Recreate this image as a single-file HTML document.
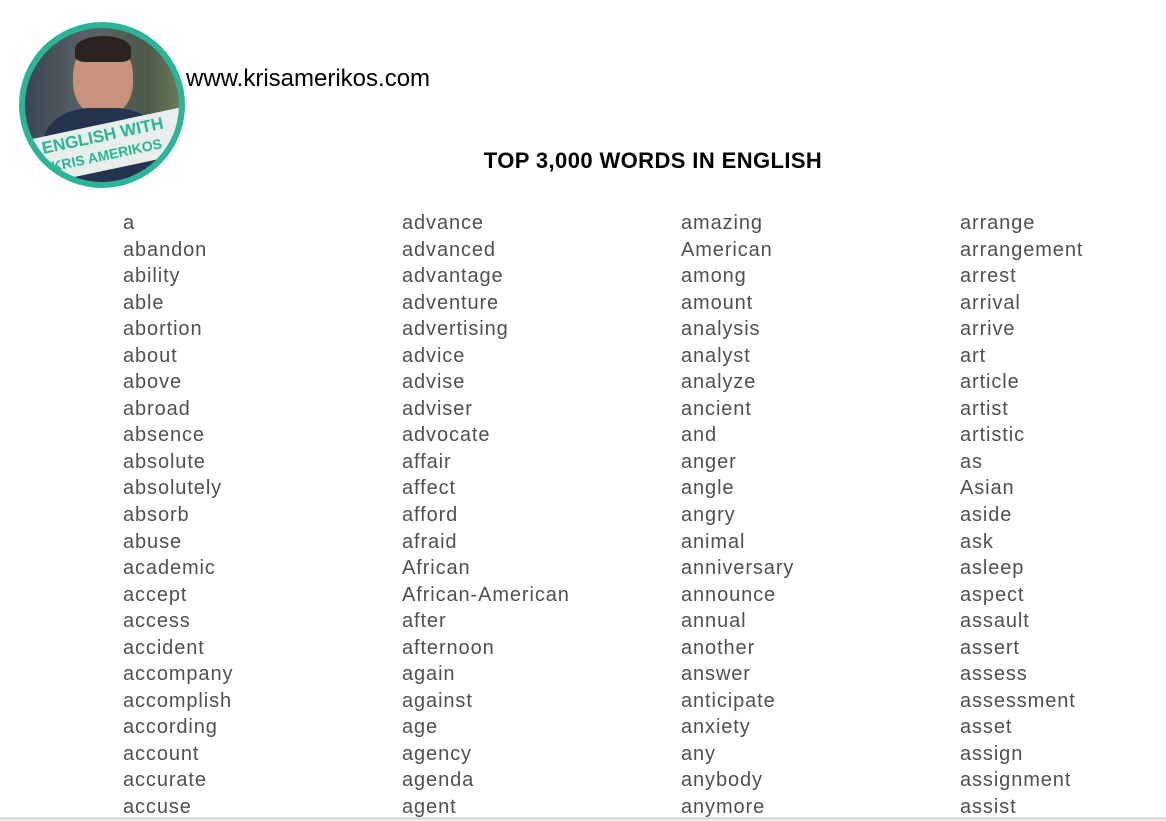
<!DOCTYPE html>
<html><head><style>
body{margin:0;width:1166px;height:820px;background:#fff;position:relative;overflow:hidden;font-family:"Liberation Sans",sans-serif}
.logo{position:absolute;left:19px;top:22px;width:166px;height:166px;border-radius:50%;background:#2bb598;overflow:hidden}
.inner{position:absolute;left:6px;top:6px;width:154px;height:154px;border-radius:50%;overflow:hidden;background:linear-gradient(90deg,#3a4650 0%,#5a6268 40%,#4d5a48 80%,#6b7a5a 100%)}
.url{position:absolute;left:186px;top:65px;font-size:24px;color:#000}
.title{position:absolute;left:0;width:1306px;text-align:center;top:148px;font-size:22px;font-weight:bold;color:#000;letter-spacing:0.4px}
.col{position:absolute;top:210px;font-size:20px;color:#505050;line-height:26.55px;letter-spacing:0.9px}
.bot{position:absolute;left:0;top:817px;width:1166px;height:3px;background:#ddd}
</style></head><body>
<div class="logo"><div class="inner">
<div style="position:absolute;left:48px;top:14px;width:60px;height:74px;border-radius:45%;background:#c9927a"></div>
<div style="position:absolute;left:50px;top:8px;width:56px;height:26px;border-radius:50% 50% 20% 20%;background:#2a2320"></div>
<div style="position:absolute;left:18px;top:80px;width:120px;height:90px;border-radius:40% 40% 0 0;background:#25334f"></div>
<div style="position:absolute;left:-10px;top:96px;width:180px;height:44px;background:#e8eeec;transform:rotate(-12deg);color:#2bb598;font-weight:bold;font-size:17px;line-height:19px;text-align:center;padding-top:2px">ENGLISH WITH<br><span style="font-size:14px">KRIS AMERIKOS</span></div>
</div></div>
<div class="url">www.krisamerikos.com</div>
<div class="title">TOP 3,000 WORDS IN ENGLISH</div>
<div class="col" style="left:123px">a<br>abandon<br>ability<br>able<br>abortion<br>about<br>above<br>abroad<br>absence<br>absolute<br>absolutely<br>absorb<br>abuse<br>academic<br>accept<br>access<br>accident<br>accompany<br>accomplish<br>according<br>account<br>accurate<br>accuse</div>
<div class="col" style="left:402px">advance<br>advanced<br>advantage<br>adventure<br>advertising<br>advice<br>advise<br>adviser<br>advocate<br>affair<br>affect<br>afford<br>afraid<br>African<br>African-American<br>after<br>afternoon<br>again<br>against<br>age<br>agency<br>agenda<br>agent</div>
<div class="col" style="left:681px">amazing<br>American<br>among<br>amount<br>analysis<br>analyst<br>analyze<br>ancient<br>and<br>anger<br>angle<br>angry<br>animal<br>anniversary<br>announce<br>annual<br>another<br>answer<br>anticipate<br>anxiety<br>any<br>anybody<br>anymore</div>
<div class="col" style="left:960px">arrange<br>arrangement<br>arrest<br>arrival<br>arrive<br>art<br>article<br>artist<br>artistic<br>as<br>Asian<br>aside<br>ask<br>asleep<br>aspect<br>assault<br>assert<br>assess<br>assessment<br>asset<br>assign<br>assignment<br>assist</div>
<div class="bot"></div>
</body></html>
